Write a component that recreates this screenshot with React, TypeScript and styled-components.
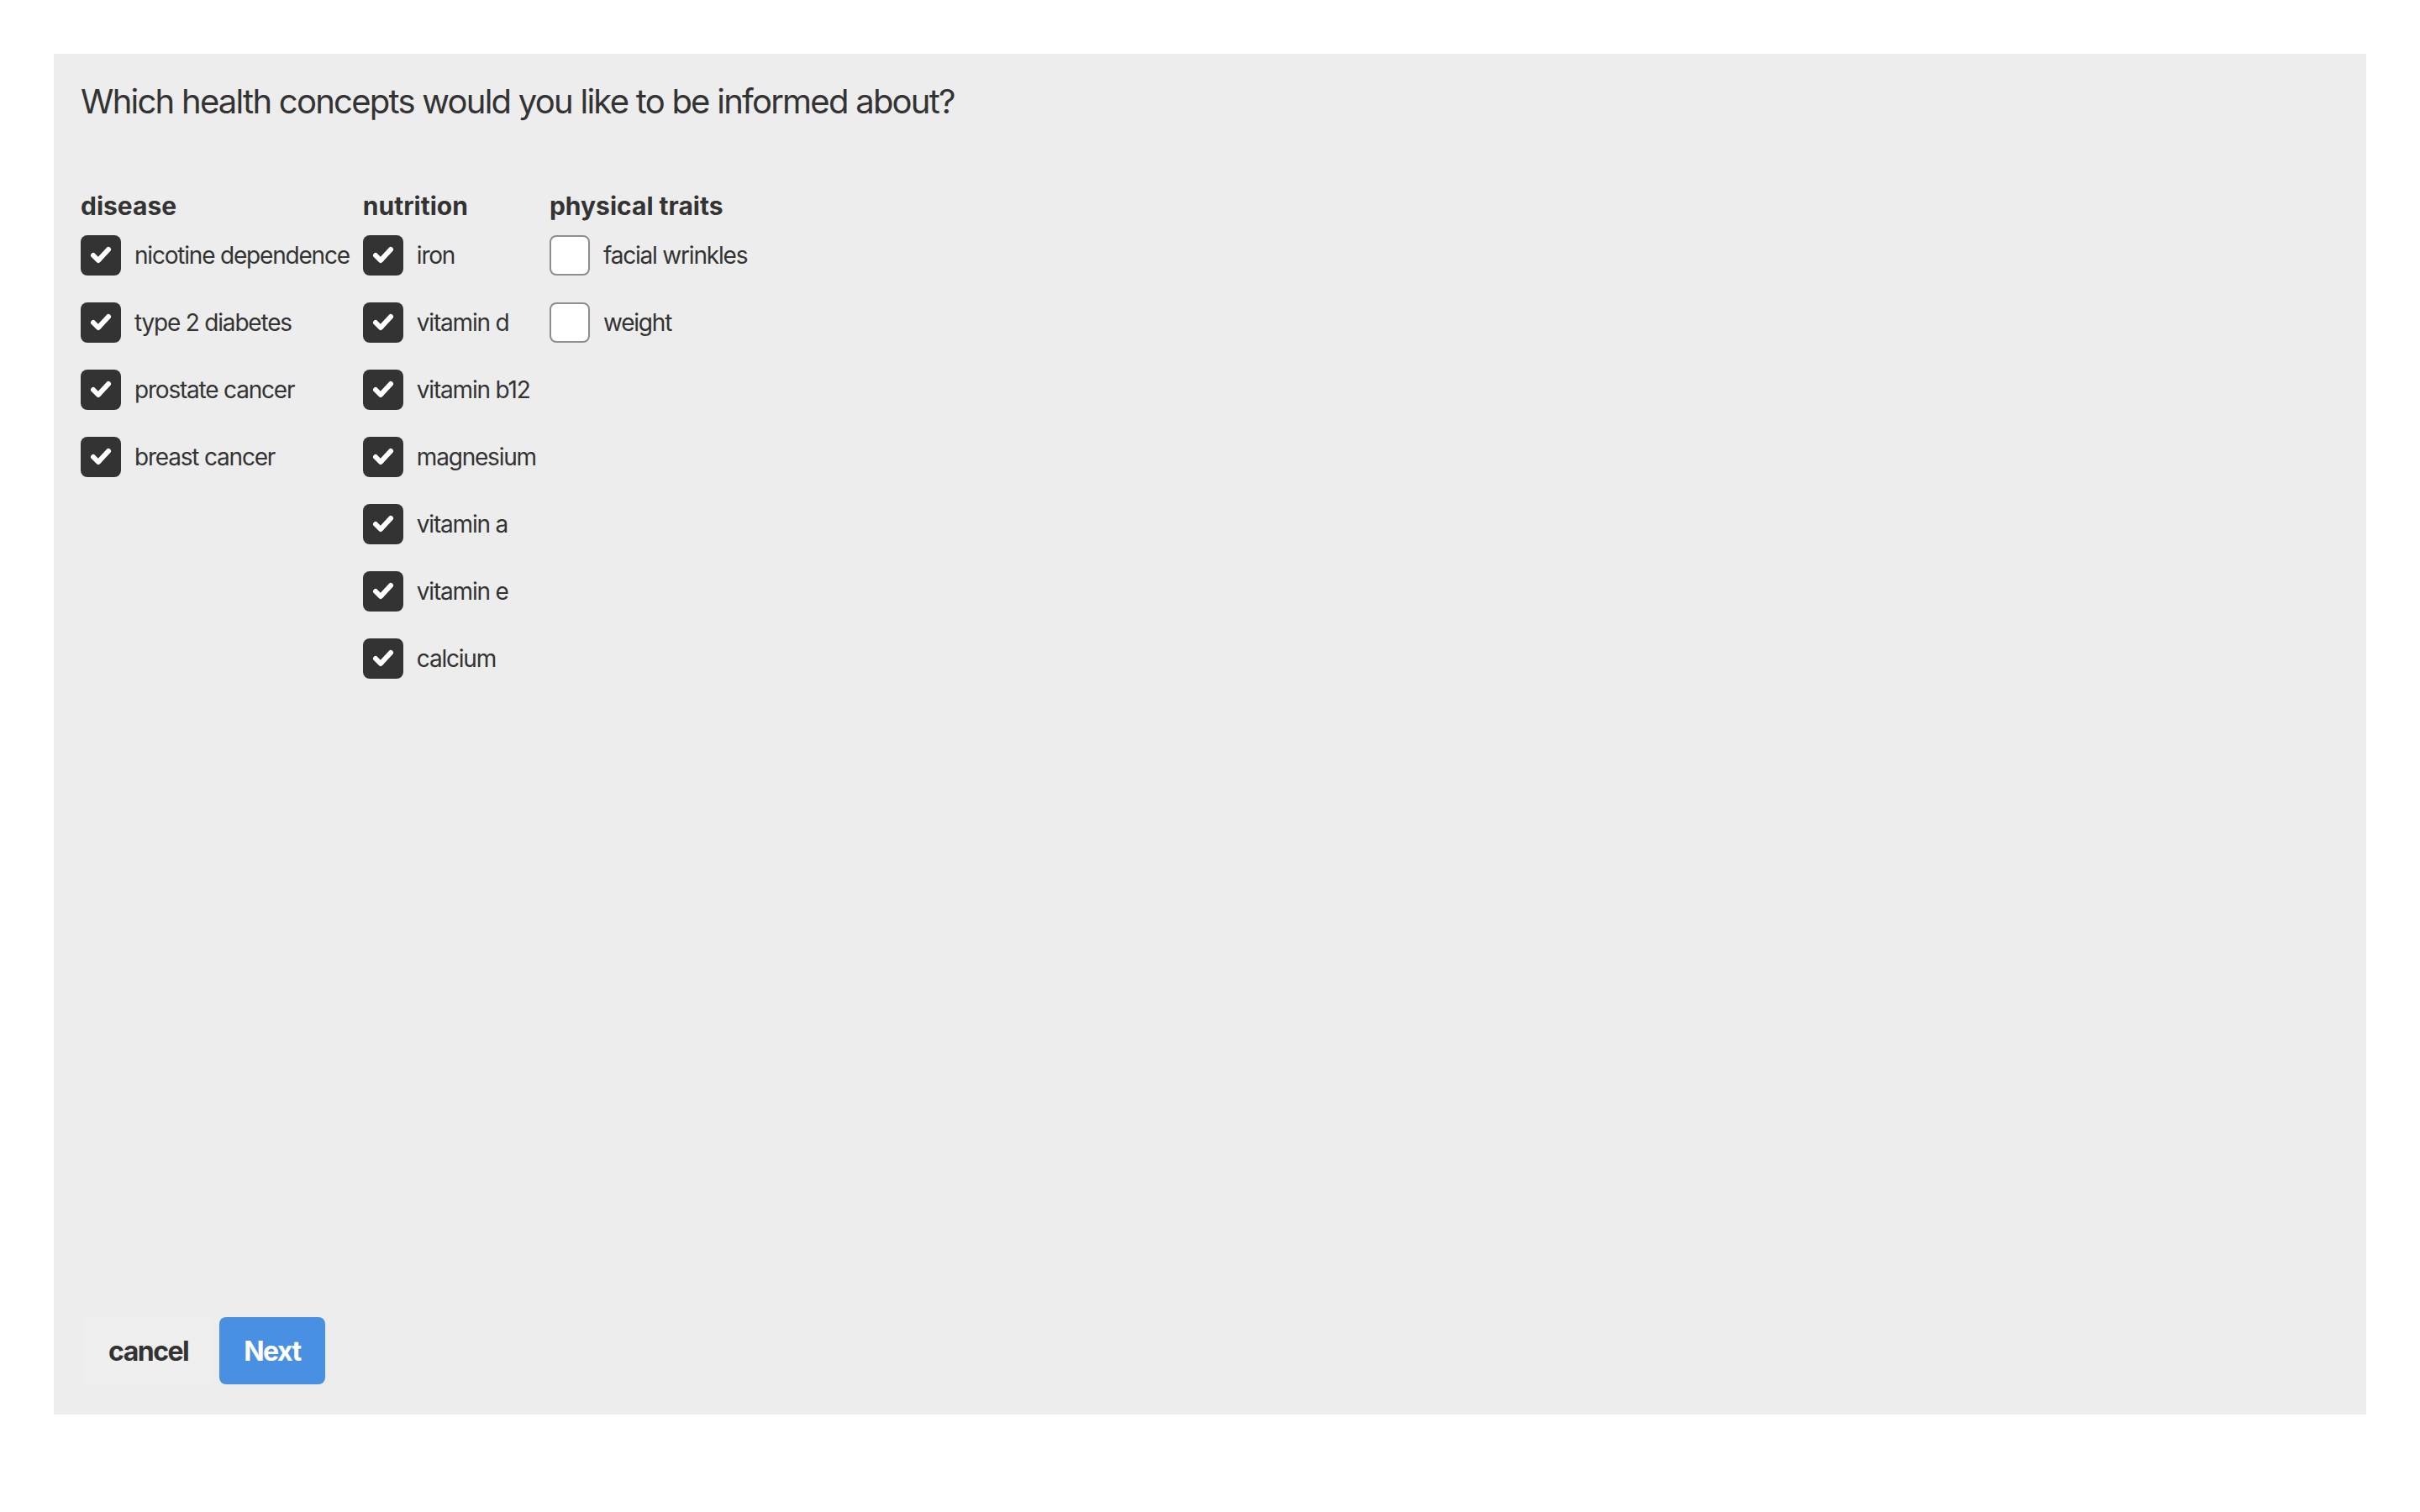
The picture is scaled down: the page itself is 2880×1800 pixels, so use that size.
import React, { useState } from "react";
import styled, { createGlobalStyle } from "styled-components";

const GlobalStyle = createGlobalStyle`
  html, body { margin: 0; padding: 0; background: #ffffff; }
  body { font-family: Inter, "Noto Sans", sans-serif; color: #333333; }
  * { box-sizing: border-box; }
`;

const Page = styled.div`
  padding: 64px;
`;

const Panel = styled.div`
  background: #ededed;
  height: 1620px;
  padding: 32px 32px 32px 32px;
  display: flex;
  flex-direction: column;
`;

const Title = styled.h1`
  margin: 0;
  font-size: 40px;
  line-height: 50px;
  font-weight: 400;
  color: #333333;
  letter-spacing: -1.75px;
`;

const Columns = styled.div`
  display: flex;
  gap: 16px;
  margin-top: 81px;
  align-items: flex-start;
`;

const Column = styled.div`
  display: flex;
  flex-direction: column;
`;

const Heading = styled.h2`
  margin: 0 0 17px;
  font-size: 30px;
  line-height: 36px;
  font-weight: 700;
  color: #333333;
  letter-spacing: 0;
`;

const List = styled.div`
  display: flex;
  flex-direction: column;
  gap: 32px;
`;

const Row = styled.label`
  display: flex;
  align-items: center;
  gap: 16px;
  cursor: pointer;
`;

const Box = styled.span<{ $checked: boolean }>`
  width: 48px;
  height: 48px;
  flex: none;
  border-radius: 8px;
  display: flex;
  align-items: center;
  justify-content: center;
  background: ${(p) => (p.$checked ? "#333333" : "#ffffff")};
  border: ${(p) => (p.$checked ? "none" : "2px solid #8e8e8e")};
`;

const Label = styled.span`
  font-size: 28px;
  line-height: 48px;
  color: #333333;
  white-space: nowrap;
  letter-spacing: -1.2px;
`;

const Footer = styled.div`
  margin-top: auto;
  display: flex;
  gap: 8px;
  padding: 0 4px 4px;
`;

const Button = styled.button<{ $primary?: boolean }>`
  height: 80px;
  padding: 0 29px;
  border: none;
  border-radius: 8px;
  font-family: Inter, "Noto Sans", sans-serif;
  font-size: 32px;
  font-weight: 700;
  letter-spacing: -1.5px;
  cursor: pointer;
  background: ${(p) => (p.$primary ? "#4a90e2" : "#efefef")};
  color: ${(p) => (p.$primary ? "#ffffff" : "#333333")};
`;

const CheckIcon = () => (
  <svg width="48" height="48" viewBox="0 0 48 48">
    <polyline
      points="15,24 21,30 33,17"
      fill="none"
      stroke="#ffffff"
      strokeWidth="6"
      strokeLinecap="round"
      strokeLinejoin="round"
    />
  </svg>
);

type Item = { label: string; checked: boolean };

const initial: { title: string; items: Item[] }[] = [
  {
    title: "disease",
    items: [
      { label: "nicotine dependence", checked: true },
      { label: "type 2 diabetes", checked: true },
      { label: "prostate cancer", checked: true },
      { label: "breast cancer", checked: true },
    ],
  },
  {
    title: "nutrition",
    items: [
      { label: "iron", checked: true },
      { label: "vitamin d", checked: true },
      { label: "vitamin b12", checked: true },
      { label: "magnesium", checked: true },
      { label: "vitamin a", checked: true },
      { label: "vitamin e", checked: true },
      { label: "calcium", checked: true },
    ],
  },
  {
    title: "physical traits",
    items: [
      { label: "facial wrinkles", checked: false },
      { label: "weight", checked: false },
    ],
  },
];

export default function App() {
  const [groups, setGroups] = useState(initial);
  const toggle = (g: number, i: number) =>
    setGroups((prev) =>
      prev.map((grp, gi) =>
        gi !== g
          ? grp
          : {
              ...grp,
              items: grp.items.map((it, ii) =>
                ii === i ? { ...it, checked: !it.checked } : it
              ),
            }
      )
    );

  return (
    <Page>
      <GlobalStyle />
      <Panel>
        <Title>Which health concepts would you like to be informed about?</Title>
        <Columns>
          {groups.map((grp, g) => (
            <Column key={grp.title}>
              <Heading>{grp.title}</Heading>
              <List>
                {grp.items.map((it, i) => (
                  <Row key={it.label} onClick={() => toggle(g, i)}>
                    <Box $checked={it.checked}>{it.checked && <CheckIcon />}</Box>
                    <Label>{it.label}</Label>
                  </Row>
                ))}
              </List>
            </Column>
          ))}
        </Columns>
        <Footer>
          <Button>cancel</Button>
          <Button $primary>Next</Button>
        </Footer>
      </Panel>
    </Page>
  );
}
